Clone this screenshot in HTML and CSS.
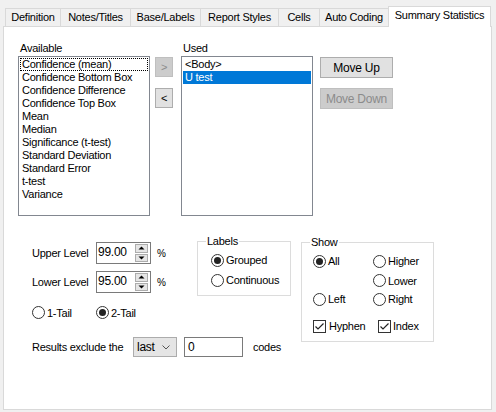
FILE: index.html
```html
<!DOCTYPE html>
<html>
<head>
<meta charset="utf-8">
<title>Summary Statistics</title>
<link rel="stylesheet" href="styles.css">
</head>
<body>
<div class="tabs">
  <div class="tab tab-def">Definition</div>
  <div class="tab tab-notes">Notes/Titles</div>
  <div class="tab tab-base">Base/Labels</div>
  <div class="tab tab-report">Report Styles</div>
  <div class="tab tab-cells">Cells</div>
  <div class="tab tab-auto">Auto Coding</div>
  <div class="tab tab-active">Summary Statistics</div>
</div>
<div class="panel">
  <div class="top-row">
    <div class="list-col">
      <div class="caption">Available</div>
      <div class="listbox">
        <div class="item focus">Confidence (mean)</div>
        <div class="item">Confidence Bottom Box</div>
        <div class="item">Confidence Difference</div>
        <div class="item">Confidence Top Box</div>
        <div class="item">Mean</div>
        <div class="item">Median</div>
        <div class="item">Significance (t-test)</div>
        <div class="item">Standard Deviation</div>
        <div class="item">Standard Error</div>
        <div class="item">t-test</div>
        <div class="item">Variance</div>
      </div>
    </div>
    <div class="arrow-col">
      <button class="btn btn-arrow" disabled>&gt;</button>
      <button class="btn btn-arrow">&lt;</button>
    </div>
    <div class="list-col used-col">
      <div class="caption">Used</div>
      <div class="listbox">
        <div class="item">&lt;Body&gt;</div>
        <div class="item selected">U test</div>
      </div>
    </div>
    <div class="move-col">
      <button class="btn btn-move">Move Up</button>
      <button class="btn btn-move" disabled>Move Down</button>
    </div>
  </div>

  <div class="options">
    <div class="levels">
      <div class="level-row">
        <span class="level-label">Upper Level</span>
        <div class="spin">
          <span class="spin-value">99.00</span>
          <span class="spin-btns">
            <span class="spin-btn"><svg width="7" height="4" viewBox="0 0 7 4"><polygon points="0.5,3.5 3.5,0.5 6.5,3.5" fill="#000"/></svg></span>
            <span class="spin-btn"><svg width="7" height="4" viewBox="0 0 7 4"><polygon points="0.5,0.5 3.5,3.5 6.5,0.5" fill="#000"/></svg></span>
          </span>
        </div>
        <span class="pct">%</span>
      </div>
      <div class="level-row">
        <span class="level-label">Lower Level</span>
        <div class="spin">
          <span class="spin-value">95.00</span>
          <span class="spin-btns">
            <span class="spin-btn"><svg width="7" height="4" viewBox="0 0 7 4"><polygon points="0.5,3.5 3.5,0.5 6.5,3.5" fill="#000"/></svg></span>
            <span class="spin-btn"><svg width="7" height="4" viewBox="0 0 7 4"><polygon points="0.5,0.5 3.5,3.5 6.5,0.5" fill="#000"/></svg></span>
          </span>
        </div>
        <span class="pct">%</span>
      </div>
      <div class="tail-row">
        <label class="opt tail-opt"><span class="radio"></span>1-Tail</label>
        <label class="opt"><span class="radio checked"></span>2-Tail</label>
      </div>
    </div>

    <fieldset class="group labels-group">
      <legend>Labels</legend>
      <div class="labels-body">
        <label class="opt row20"><span class="radio checked"></span>Grouped</label>
        <label class="opt row20"><span class="radio"></span>Continuous</label>
      </div>
    </fieldset>

    <fieldset class="group show-group">
      <legend>Show</legend>
      <div class="show-body">
        <label class="opt"><span class="radio checked"></span>All</label>
        <label class="opt"><span class="radio"></span>Higher</label>
        <span></span>
        <label class="opt"><span class="radio"></span>Lower</label>
        <label class="opt"><span class="radio"></span>Left</label>
        <label class="opt"><span class="radio"></span>Right</label>
        <div class="check-row">
          <label class="opt hyphen-opt"><span class="check"><svg width="11" height="11" viewBox="0 0 11 11"><polyline points="1.5,5.5 4,8 9.5,2.5" fill="none" stroke="#222" stroke-width="1.2"/></svg></span>Hyphen</label>
          <label class="opt"><span class="check"><svg width="11" height="11" viewBox="0 0 11 11"><polyline points="1.5,5.5 4,8 9.5,2.5" fill="none" stroke="#222" stroke-width="1.2"/></svg></span>Index</label>
        </div>
      </div>
    </fieldset>

    <div class="results-row">
      <span class="results-label">Results exclude the</span>
      <div class="combo">
        <span>last</span>
        <svg width="8" height="5" viewBox="0 0 8 5"><polyline points="0.5,0.5 4,4 7.5,0.5" fill="none" stroke="#555" stroke-width="1"/></svg>
      </div>
      <div class="textbox">0</div>
      <span class="codes">codes</span>
    </div>
  </div>
</div>
</body>
</html>
```

FILE: styles.css
```css
* { box-sizing: border-box; }
html, body { margin: 0; padding: 0; }
body {
  background: #f0f0f0;
  font-family: "Liberation Sans", Arial, sans-serif;
  font-size: 11px;
  letter-spacing: -0.25px;
  color: #000;
  width: 496px;
  height: 412px;
  overflow: hidden;
}

/* Tabs */
.tabs {
  display: flex;
  align-items: flex-end;
  height: 20px;
  margin: 6px 0 0 5px;
  position: relative;
  z-index: 1;
}
.tab {
  height: 18px;
  border-top: 1px solid #d9d9d9;
  border-left: 1px solid #d9d9d9;
  background: #f0f0f0;
  text-align: center;
  line-height: 17px;
  white-space: nowrap;
}
.tab-def { width: 55px; }
.tab-notes { width: 70px; }
.tab-base { width: 70px; }
.tab-report { width: 78px; }
.tab-cells { width: 41px; }
.tab-auto { width: 69px; }
.tab-active {
  width: 103px;
  height: 21px;
  margin-bottom: -1px;
  background: #fff;
  border-right: 1px solid #d9d9d9;
  line-height: 16px;
}

/* Panel */
.panel {
  margin-left: 3px;
  width: 489px;
  height: 384px;
  background: #fff;
  border: 1px solid #d9d9d9;
  padding-top: 14px;
}

.top-row {
  display: flex;
  align-items: flex-start;
}
.list-col {
  width: 132px;
  margin-left: 14px;
}
.used-col { margin-left: 8px; }
.caption {
  height: 15px;
  line-height: 15px;
  padding-left: 2px;
}
.listbox {
  height: 160px;
  border: 1px solid #828790;
  padding: 1px;
  background: #fff;
}
.item {
  height: 13px;
  line-height: 13px;
  padding-left: 2px;
  white-space: nowrap;
}
.item.focus {
  outline: 1px dotted #000;
  outline-offset: -1px;
}
.item.selected {
  background: #0078d7;
  color: #fff;
}

.arrow-col {
  display: flex;
  flex-direction: column;
  gap: 11px;
  margin: 16px 0 0 5px;
  width: 18px;
}
.move-col {
  display: flex;
  flex-direction: column;
  gap: 10px;
  margin: 16px 0 0 7px;
  width: 73px;
}
.btn {
  font-family: inherit;
  font-size: 11px;
  letter-spacing: -0.25px;
  color: #000;
  background: #e1e1e1;
  border: 1px solid #adadad;
  padding: 0;
  margin: 0;
  border-radius: 0;
}
.btn:disabled {
  background: #cccccc;
  border-color: #bfbfbf;
  color: #8b8b8b;
}
.btn-arrow { width: 18px; height: 20px; }
.btn-move { width: 73px; height: 21px; font-size: 12px; }

/* Options */
.options {
  display: grid;
  grid-template-columns: 155px 94px 133px;
  grid-template-areas:
    "levels labels show"
    "results results show";
  column-gap: 10px;
  margin: 19px 0 0 28px;
  align-items: start;
}
.levels {
  grid-area: levels;
  padding-top: 7px;
  display: flex;
  flex-direction: column;
  gap: 7px;
}
.level-row {
  display: flex;
  align-items: center;
  height: 22px;
}
.level-label { width: 64px; }
.spin {
  display: flex;
  width: 55px;
  height: 22px;
  border: 1px solid #7a7a7a;
  background: #fff;
}
.spin-value {
  flex: 1;
  padding-left: 1px;
  line-height: 19px;
  font-size: 12px;
}
.spin-btns {
  display: flex;
  flex-direction: column;
  gap: 1px;
  width: 13px;
  margin: 1px 2px 1px 0;
}
.spin-btn {
  flex: 1;
  display: flex;
  align-items: center;
  justify-content: center;
  background: #e5e5e5;
  border: 1px solid #acacac;
}
.pct { margin-left: 6px; font-size: 10px; }

.tail-row {
  display: flex;
  align-items: center;
  height: 13px;
  margin-top: 6px;
}
.tail-opt { width: 64px; }

.opt {
  display: flex;
  align-items: center;
  gap: 2px;
  white-space: nowrap;
}
.radio {
  width: 13px;
  height: 13px;
  border: 1px solid #333;
  border-radius: 50%;
  background: #fff;
  display: flex;
  align-items: center;
  justify-content: center;
  flex: none;
}
.radio.checked::after {
  content: "";
  width: 7px;
  height: 7px;
  border-radius: 50%;
  background: #222;
}
.check {
  width: 13px;
  height: 13px;
  border: 1px solid #333;
  background: #fff;
  display: flex;
  flex: none;
}

.group {
  margin: 0;
  border: 1px solid #dcdcdc;
  min-width: 0;
}
.group legend {
  padding: 0 1px;
  line-height: 13px;
  height: 13px;
}
.labels-group {
  grid-area: labels;
  height: 61px;
  padding: 2px 0 5px 8px;
}
.labels-body { margin-left: 5px; }
.row20 { height: 20px; }

.show-group {
  grid-area: show;
  margin-top: 1px;
  padding: 2px 0 6px 8px;
}
.show-body {
  margin-left: 3px;
  display: grid;
  grid-template-columns: 60px auto;
  grid-template-rows: 20px 19px 18px auto;
}
.check-row {
  grid-column: 1 / 3;
  display: flex;
  align-items: center;
  height: 18px;
  margin-top: 9px;
}
.hyphen-opt { width: 65px; gap: 3px; }

.results-row {
  grid-area: results;
  display: flex;
  align-items: center;
  margin-top: 18px;
  white-space: nowrap;
}
.results-label { width: 101px; }
.combo {
  width: 44px;
  height: 20px;
  background: #e5e5e5;
  border: 1px solid #acacac;
  display: flex;
  align-items: center;
  justify-content: space-between;
  padding: 0 6px 0 3px;
  font-size: 12px;
}
.textbox {
  width: 59px;
  height: 20px;
  margin-left: 7px;
  border: 1px solid #7a7a7a;
  padding-left: 3px;
  line-height: 18px;
  font-size: 12px;
}
.codes { margin-left: 10px; }
```
